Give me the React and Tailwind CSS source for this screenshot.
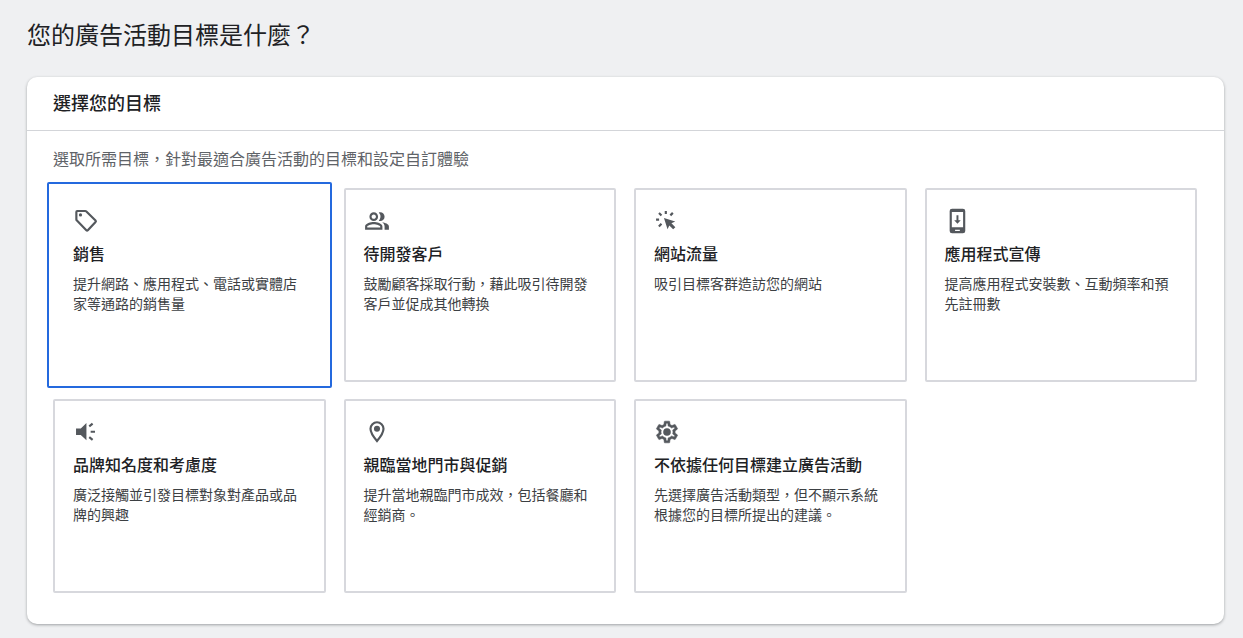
import React, { useState } from 'react';
import clsx from 'clsx';
import { MdOutlinePeopleAlt } from 'react-icons/md';

const iconClass = 'h-[26px] w-[26px] shrink-0 text-[#54585d]';

function TagIcon() {
  return (
    <svg viewBox="0 0 24 24" className={iconClass} fill="none" aria-hidden="true">
      <path
        d="M3.9 2.8h7.4c.3 0 .6.1.8.3l8.7 8.4c.4.4.4 1 0 1.4l-7.1 7.7c-.4.4-1 .4-1.4 0L3.4 11.4c-.2-.2-.3-.5-.3-.8v-7c0-.4.4-.8.8-.8z"
        stroke="currentColor"
        strokeWidth="2"
      />
      <circle cx="6.9" cy="6.4" r="1.5" fill="currentColor" />
    </svg>
  );
}

function CursorIcon() {
  return (
    <svg viewBox="0 0 24 24" className={iconClass} fill="currentColor" aria-hidden="true">
      <path d="M9.2 9.2l10.4 3.3-3.5 1.6 3.6 3.6-2 2-3.6-3.6-1.6 3.5z" />
      <path
        d="M10.9 2.8v2.8M1.9 10.8h2.8M4.6 4.6l2.3 2.3M17.4 4.5l-2.3 2.3M4.5 17l2.4-2.4"
        stroke="currentColor"
        strokeWidth="2"
      />
    </svg>
  );
}

function PhoneDownloadIcon() {
  return (
    <svg viewBox="0 0 24 24" className={iconClass} fill="currentColor" aria-hidden="true">
      <path
        fillRule="evenodd"
        d="M6.5.6h10a2.2 2.2 0 0 1 2.2 2.2v18.4a2.2 2.2 0 0 1-2.2 2.2h-10a2.2 2.2 0 0 1-2.2-2.2V2.800A2.200 2.200 0 0 1 6.500.6zM6.300 3.700v14.100h10.400V3.700zM9.300 20v1.200h4.400V20z"
      />
      <path d="M10.6 6.8h1.8v4.4h2.1l-3 3.3-3-3.3h2.1z" />
    </svg>
  );
}

function SpeakerIcon() {
  return (
    <svg viewBox="0 0 24 24" className={iconClass} fill="currentColor" aria-hidden="true">
      <path d="M2.8 8.7h4.4l5.200-5v16l-5.200-5H2.800z" />
      <path
        d="M15 6.800l3.100-2.500M16.300 11.800h4M15 16.800l3.100 2.500"
        stroke="currentColor"
        strokeWidth="2"
      />
    </svg>
  );
}

function PinIcon() {
  return (
    <svg viewBox="0 0 24 24" className={iconClass} fill="currentColor" aria-hidden="true">
      <path
        d="M12 3C8.700 3 6 5.700 6 9c0 4 4.200 9.200 6 11.300C13.800 18.200 18 13 18 9c0-3.300-2.700-6-6-6z"
        fill="none"
        stroke="currentColor"
        strokeWidth="2"
      />
      <circle cx="12" cy="9" r="2.800" />
    </svg>
  );
}

function GearIcon() {
  return (
    <svg viewBox="0 0 24 24" className={iconClass} fill="currentColor" aria-hidden="true">
      <path
        d="M19.430 12.980c.04-.32.07-.64.07-.98 0-.34-.03-.66-.07-.98l2.110-1.650c.19-.15.24-.42.12-.64l-2-3.460c-.09-.16-.26-.25-.44-.25-.06 0-.12.01-.17.03l-2.490 1c-.52-.4-1.080-.73-1.690-.98l-.38-2.650C14.460 2.180 14.250 2 14 2h-4c-.25 0-.46.18-.49.42l-.38 2.650c-.61.25-1.170.59-1.690.98l-2.490-1c-.06-.02-.12-.03-.18-.03-.17 0-.34.09-.43.25l-2 3.460c-.13.22-.07.49.12.64l2.110 1.650c-.04.32-.07.65-.07.98 0 .33.03.66.07.98l-2.110 1.650c-.19.15-.24.42-.12.64l2 3.460c.09.16.26.25.44.25.06 0 .12-.01.17-.03l2.490-1c.52.4 1.080.73 1.690.98l.38 2.650c.03.24.24.42.49.42h4c.25 0 .46-.18.49-.42l.38-2.650c.61-.25 1.170-.59 1.690-.98l2.490 1c.06.02.12.03.18.03.17 0 .34-.09.43-.25l2-3.460c.12-.22.07-.49-.12-.64l-2.110-1.650zm-1.980-1.710c.04.31.05.52.05.73 0 .21-.02.43-.05.73l-.14 1.130.89.7 1.080.84-.7 1.210-1.270-.51-1.040-.42-.9.68c-.43.32-.84.56-1.250.73l-1.060.43-.16 1.130-.2 1.350h-1.400l-.19-1.350-.16-1.130-1.060-.43c-.43-.18-.83-.41-1.230-.71l-.91-.7-1.060.43-1.270.51-.7-1.210 1.080-.84.89-.7-.14-1.130c-.03-.31-.05-.54-.05-.74s.02-.43.05-.73l.14-1.130-.89-.7-1.080-.84.7-1.210 1.270.51 1.040.42.9-.68c.43-.32.84-.56 1.250-.73l1.060-.43.16-1.130.2-1.350h1.390l.19 1.350.16 1.130 1.060.43c.43.18.83.41 1.230.71l.91.7 1.060-.43 1.270-.51.7 1.210-1.070.85-.89.7.14 1.130z"
        stroke="currentColor"
        strokeWidth="0.5"
        strokeLinejoin="round"
      />
      <circle cx="12" cy="12" r="3.500" />
    </svg>
  );
}

const goals = [
  {
    id: 'sales',
    icon: <TagIcon />,
    title: '銷售',
    description: '提升網路、應用程式、電話或實體店家等通路的銷售量',
  },
  {
    id: 'leads',
    icon: <MdOutlinePeopleAlt className={iconClass} />,
    title: '待開發客戶',
    description: '鼓勵顧客採取行動，藉此吸引待開發客戶並促成其他轉換',
  },
  {
    id: 'traffic',
    icon: <CursorIcon />,
    title: '網站流量',
    description: '吸引目標客群造訪您的網站',
  },
  {
    id: 'app',
    icon: <PhoneDownloadIcon />,
    title: '應用程式宣傳',
    description: '提高應用程式安裝數、互動頻率和預先註冊數',
  },
  {
    id: 'awareness',
    icon: <SpeakerIcon />,
    title: '品牌知名度和考慮度',
    description: '廣泛接觸並引發目標對象對產品或品牌的興趣',
  },
  {
    id: 'local',
    icon: <PinIcon />,
    title: '親臨當地門市與促銷',
    description: '提升當地親臨門市成效，包括餐廳和經銷商。',
  },
  {
    id: 'none',
    icon: <GearIcon />,
    title: '不依據任何目標建立廣告活動',
    description: '先選擇廣告活動類型，但不顯示系統根據您的目標所提出的建議。',
  },
];

function GoalCard({ goal, selected, onSelect }) {
  return (
    <button
      type="button"
      aria-pressed={selected}
      onClick={() => onSelect(goal.id)}
      className={clsx(
        'flex min-h-[194px] cursor-pointer flex-col items-start rounded-[2px] border-2 bg-white text-left',
        selected ? '-m-1.5 border-[#2469de] p-6' : 'border-[#d7d8dd] p-[18px]'
      )}
    >
      {goal.icon}
      <span className="mt-[7px] text-base leading-6 font-medium text-[#202124]">{goal.title}</span>
      <span className="mt-2 text-sm leading-5 text-[#3c4043]">{goal.description}</span>
    </button>
  );
}

export default function App() {
  const [selectedGoal, setSelectedGoal] = useState('sales');

  return (
    <main
      lang="zh-Hant"
      className="min-h-screen bg-[#eff0f2] pt-[18px] pr-[19px] pb-[13px] pl-[27px] font-['Noto_Sans_CJK_TC',sans-serif]"
    >
      <h1 className="text-2xl leading-8 font-normal text-[#202124]">您的廣告活動目標是什麼？</h1>

      <section className="mt-[27px] rounded-[10px] bg-white shadow-[0_1px_3px_rgba(60,64,67,0.45)]">
        <h2 className="border-b border-[#d3d5d9] px-[26px] pt-3 pb-[14px] text-lg leading-[27px] font-medium text-[#202124]">
          選擇您的目標
        </h2>

        <div className="pt-[15px] pr-[27px] pb-[31px] pl-[26px]">
          <p className="text-base leading-6 text-[#5f6368]">
            選取所需目標，針對最適合廣告活動的目標和設定自訂體驗
          </p>
          <div className="mt-[18px] grid grid-cols-4 gap-x-[18px] gap-y-[17px]">
            {goals.map((goal) => (
              <GoalCard
                key={goal.id}
                goal={goal}
                selected={goal.id === selectedGoal}
                onSelect={setSelectedGoal}
              />
            ))}
          </div>
        </div>
      </section>
    </main>
  );
}
